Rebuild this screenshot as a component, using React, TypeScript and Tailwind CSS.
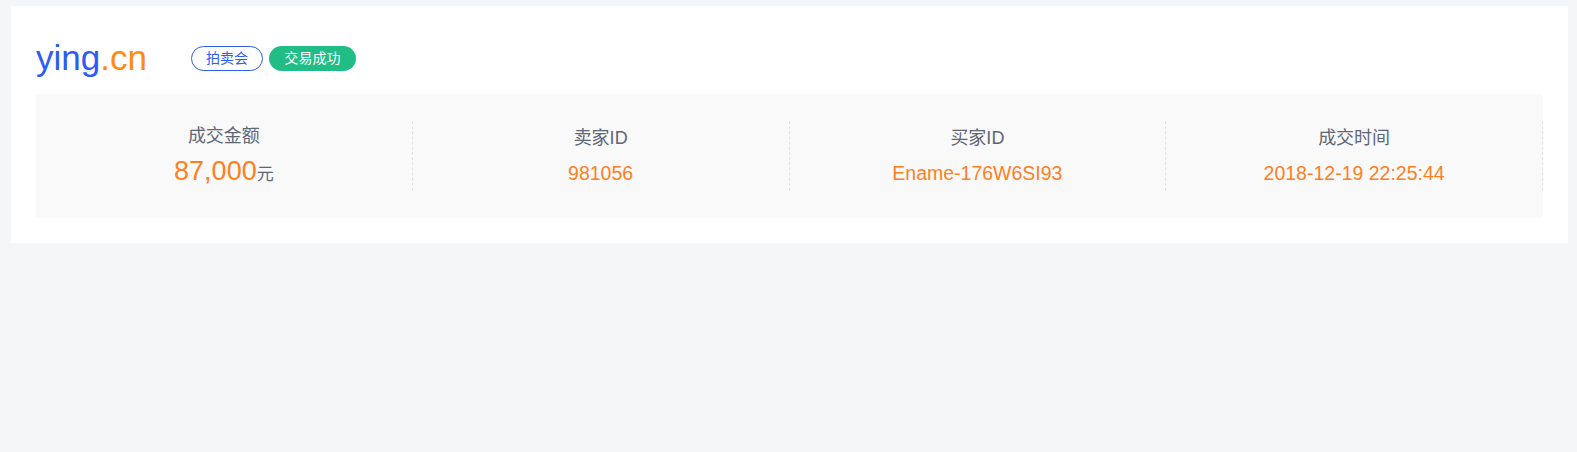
export default function App() {
  const font = { fontFamily: '"Liberation Sans", "Noto Sans CJK SC", sans-serif' };
  const cols = [
    { label: "卖家ID", value: "981056" },
    { label: "买家ID", value: "Ename-176W6SI93" },
    { label: "成交时间", value: "2018-12-19 22:25:44" },
  ];
  return (
    <div className="min-h-[452px] w-full bg-[#f5f6f8] pt-[6px]" style={font}>
      <div className="ml-[11px] mr-[9px] bg-white px-[25px] pt-[25px] pb-[25px]">
        <div className="flex h-[54px] items-center">
          <div className="text-[35px] leading-[40px]">
            <span className="text-[#2b5cf3]">ying</span>
            <span className="text-[#ff8a12]">.cn</span>
          </div>
          <span className="ml-[44px] flex h-[25px] items-center rounded-full border border-[#2b5cf3] px-[14px] text-[14px] leading-none text-[#2b5cf3]">
            拍卖会
          </span>
          <span className="ml-[6px] flex h-[25px] items-center rounded-full bg-[#21bd87] px-[15.5px] text-[14px] leading-none text-white">
            交易成功
          </span>
        </div>
        <div className="mt-[9px] grid grid-cols-4 bg-[#f9f9fa] py-[27px]">
          <div className="flex h-[70px] flex-col items-center justify-center border-r border-dashed border-[#e2e2e2]">
            <div className="text-[18px] leading-[24px] text-[#5e6673]">成交金额</div>
            <div className="mt-[9px] flex items-baseline leading-[28px]">
              <span className="text-[27px] text-[#ff7f1e]">87,000</span>
              <span className="text-[17px] text-[#5e6673]">元</span>
            </div>
          </div>
          {cols.map((c) => (
            <div
              key={c.label}
              className="flex h-[70px] flex-col items-center justify-center border-r border-dashed border-[#e2e2e2]"
            >
              <div className="text-[18px] leading-[24px] text-[#5e6673]">{c.label}</div>
              <div className="mt-[9px] text-[19.5px] leading-[28px] text-[#ff7f1e]">{c.value}</div>
            </div>
          ))}
        </div>
      </div>
    </div>
  );
}
